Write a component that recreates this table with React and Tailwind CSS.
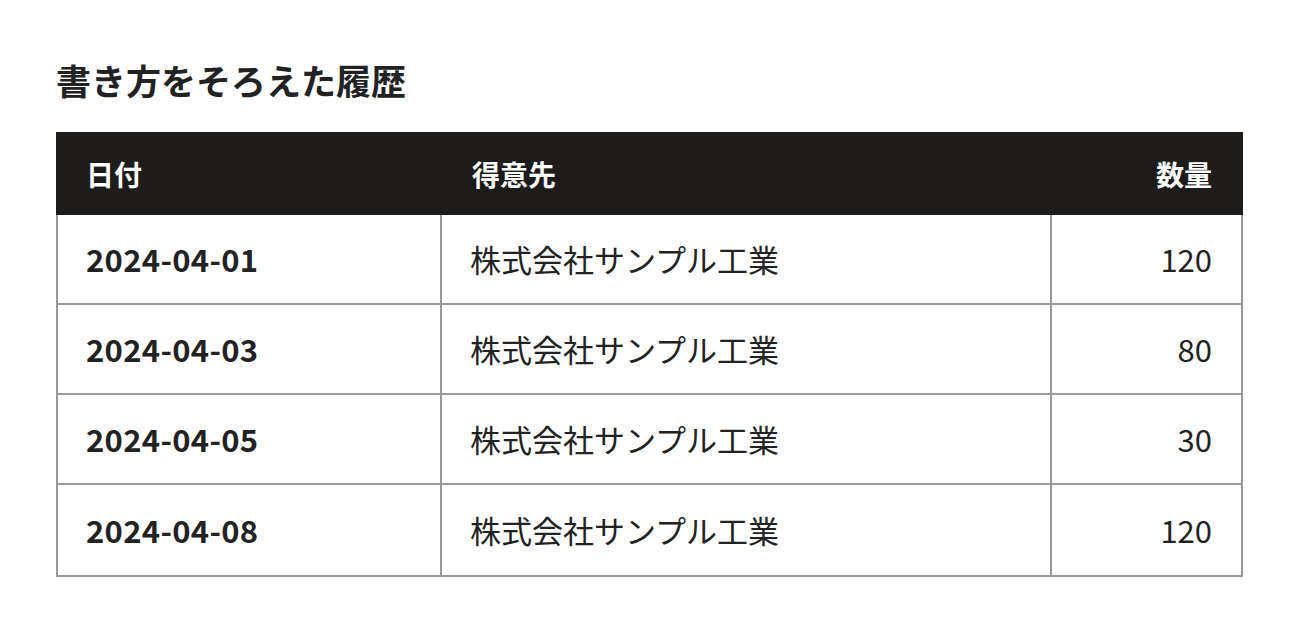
import React from "react";

const rows = [
  { date: "2024-04-01", client: "株式会社サンプル工業", qty: "120" },
  { date: "2024-04-03", client: "株式会社サンプル工業", qty: "80" },
  { date: "2024-04-05", client: "株式会社サンプル工業", qty: "30" },
  { date: "2024-04-08", client: "株式会社サンプル工業", qty: "120" },
];

export default function App() {
  return (
    <div
      className="min-h-[636px] bg-white pt-[55px] pl-[56px] text-[#222]"
      style={{ fontFamily: '"Noto Sans CJK JP", "Noto Sans", sans-serif' }}
    >
      <h1 className="h-[49px] text-[35px] font-bold leading-[49px] text-[#222]">
        書き方をそろえた履歴
      </h1>
      <div className="mt-[28px] w-[1187px]">
        <div className="grid h-[83px] grid-cols-[386px_610px_191px] items-center bg-[#1d1c1b] text-[28px] font-bold text-white">
          <div className="pl-[30px]">日付</div>
          <div className="pl-[30px]">得意先</div>
          <div className="pr-[31px] text-right">数量</div>
        </div>
        <div className="border-x-2 border-b-2 border-[#9a9a9a]">
          {rows.map((r, i) => (
            <div
              key={i}
              className={`grid h-[90px] grid-cols-[384px_610px_189px] ${i < rows.length - 1 ? "border-b-2 border-[#9a9a9a]" : ""}`}
            >
              <div className="flex items-center border-r-2 border-[#9a9a9a] pl-[28px] text-[31px] font-bold tracking-[0.01em]">
                {r.date}
              </div>
              <div className="flex items-center border-r-2 border-[#9a9a9a] pl-[28px] text-[31px]">
                {r.client}
              </div>
              <div className="flex items-center justify-end pr-[29px] text-[31px]">
                {r.qty}
              </div>
            </div>
          ))}
        </div>
      </div>
    </div>
  );
}
